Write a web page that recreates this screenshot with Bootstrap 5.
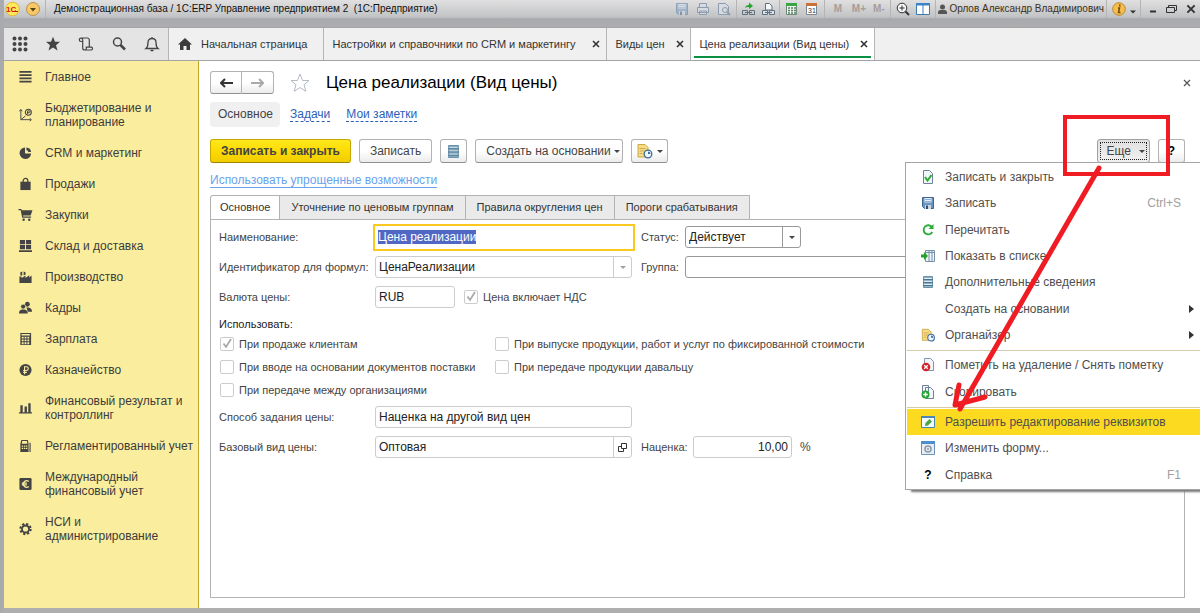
<!DOCTYPE html>
<html lang="ru">
<head>
<meta charset="utf-8">
<meta name="viewport" content="width=device-width, initial-scale=1">
<title>Цена реализации (Вид цены)</title>
<link href="https://cdn.jsdelivr.net/npm/bootstrap@5.3.0/dist/css/bootstrap.min.css" rel="stylesheet">
<style>
  body { font: 12px/14px "Liberation Sans", Arial, sans-serif; color: #444; background: #aeaeae; }
  svg { display: block; flex: none; }
  button { font: inherit; color: inherit; }
  .shell { border-left: 4px solid #a9aaad; border-bottom: 5px solid #aeaeae; overflow: hidden; }

  /* window title bar */
  .titlebar { height: 28px; padding: 0 0 10px 0; margin-left: -4px; color: #111; font-size: 10px;
    background: linear-gradient(#e0e0e1, #c2c3c5 17px, #a8a9ac 19px, #adaeb0 26px, #a3a3a3); }
  .bar-btn { border: 0; background: none; padding: 0; width: 21px; height: 18px; display: flex; align-items: center; justify-content: center; }
  .bar-btn.narrow { width: 19px; }
  .bar-sep { width: 1px; height: 18px; background: #b4b4b4; margin: 0 2px; }
  .mem { font-weight: 700; color: #a79c98; }
  .user { color: #3d3019; gap: 2px; }

  /* open sections */
  .tabbar { height: 33px; background: #f0f0f0; border-bottom: 1px solid #a5a5a5; font-size: 11px; }
  .tools { background: #e4e4e4; width: 164px; }
  .tools button { border: 0; background: none; padding: 0; width: 33px; height: 32px; display: flex; align-items: center; justify-content: center; }
  .page-tab { border-left: 1px solid #b5b5b5; padding: 0 5px 0 8px; gap: 4px; color: #333; text-decoration: none; position: relative; white-space: nowrap; }
  .page-tab.long { min-width: 283px; }
  .page-tab.short { min-width: 84px; }
  .page-tab.current { min-width: 185px; background: #fff; border-right: 1px solid #b5b5b5; }
  .page-tab.current::after { content: ""; position: absolute; left: 3px; right: 3px; bottom: 2px; height: 2px; background: #0c9143; }
  .x-btn { border: 0; background: none; padding: 0; width: 10px; height: 10px; }

  /* section list */
  .side { width: 195px; background: #fbed9e; border-right: 1px solid #bfa62c; }
  .side a { display: flex; align-items: center; gap: 12px; padding: 9px 0 8px 14px; color: #3c3c3c; text-decoration: none; }
  .side svg { width: 15px; height: 14px; fill: #444; }

  /* form */
  .sheet { background: #fff; padding: 10px 15px 10px 11px; min-width: 0; }
  .btn1 { height: 24px; border: 1px solid #b3b3b3; border-bottom-color: #909090; border-radius: 3px; background: linear-gradient(#fff 50%, #ececec); padding: 0 10px; display: flex; align-items: center; justify-content: center; white-space: nowrap; }
  .btn1.main { background: linear-gradient(#ffe81c, #fbd800 60%, #f1cd00); border-color: #c6a800; border-bottom-color: #9e8600; font-weight: 700; color: #444; }
  .btn1.nav1 { width: 32px; height: 23px; padding: 0; }
  .btn1.help { width: 27px; padding: 0; }
  .btn1.drop { gap: 3px; padding: 0 2px 0 10px; }
  .btn1.open { background: linear-gradient(#e0e0e0, #f1f1f1); border-color: #a0a0a0; outline: 1px dotted #222; outline-offset: -4px; padding: 0 4px 0 9px; }
  .caret { width: 0; height: 0; border: 3px solid transparent; border-top-color: #444; border-bottom: 0; }
  .heading { font-size: 17px; line-height: 22px; color: #000; font-weight: 400; }
  .form-x { margin-right: -7px; }
  .pill { background: #f0f0f0; border-radius: 4px; padding: 5px 7px 6px 8px; color: #444; text-decoration: none; }
  .dotlink { color: #2b5fb8; text-decoration: none; border-bottom: 1px dashed #2b5fb8; line-height: 13px; margin-left: 10px; }
  .softlink { color: #6aa3ee; line-height: 13px; text-decoration: none; border-bottom: 1px solid #6aa3ee; }
  .hint { margin: 10px 0 8px; }

  .form-tab { height: 25px; border: 1px solid #b3b3b3; border-left: 0; background: #eaeaea; padding: 0 11px 1px; color: #333; white-space: nowrap; font-size: 11px; }
  .form-tab:first-child { border-left: 1px solid #b3b3b3; border-top-left-radius: 3px; background: #fff; border-bottom-color: #fff; padding: 0 9px 1px; }
  .pane { border: 1px solid #b3b3b3; margin-top: -1px; padding: 6px 7px 0 8px; }
  .line { display: flex; align-items: center; height: 22px; margin-bottom: 8px; }
  .cap { width: 156px; flex: none; white-space: nowrap; }
  .pane label, .pane .use { font-size: 11px; }
  .box { height: 22px; border: 1px solid #ccc; border-radius: 3px; background: #fff; display: flex; min-width: 0; }
  .box.strong { border-color: #999; }
  .box input, .box select { border: 0; background: none; outline: 0; padding: 0 3px; flex: 1; min-width: 0; width: 10px; font: inherit; color: #222; appearance: none; }
  .box button { border: 0; border-left: 1px solid #ccc; background: none; width: 18px; padding: 0; display: flex; align-items: center; justify-content: center; }
  .box.strong button { border-color: #999; }
  .box.wide { width: 257px; flex: none; }
  .box.status { width: 116px; }
  .box.code { width: 80px; }
  .box.amount { width: 99px; }
  .box.focus1 { width: 262px; height: 27px; border: 2px solid #fac81e; border-radius: 0; margin: 0 -3px 0 -2px; align-items: center; flex: none; }
  .box input::selection { background: #5068c4; color: #fff; }
  .side-cap { width: 44px; margin-left: 9px; flex: none; }
  .tick { appearance: none; width: 14px; height: 14px; border: 1px solid #ccc; border-radius: 2px; margin: 0 0 0 1px; background: #fff; flex: none; }
  .tick:checked { background: #fff url("data:image/svg+xml,%3Csvg xmlns='http://www.w3.org/2000/svg' viewBox='0 0 12 12'%3E%3Cpath d='M2.5 5.5 5 9l5-8' fill='none' stroke='%23aaa' stroke-width='1.8'/%3E%3C/svg%3E"); }
  .check { display: flex; align-items: center; gap: 5px; height: 14px; white-space: nowrap; }
  .use { margin: 9px 0 6px; color: #222; }
  .checks { display: grid; grid-template-columns: 275px auto; justify-content: start; row-gap: 9px; margin-bottom: 9px; }

  /* command menu under the "more" button */
  .more-menu { position: absolute; top: 100%; right: -50px; width: 295px; min-height: 328px; margin-top: -1px; padding: 1px 0; background: #fff; border: 1px solid #a5a5a5; border-right: 0; box-shadow: 5px 3px 2px -1px #777; display: flex; flex-direction: column; z-index: 5; }
  .more-menu button { flex: 1 1 0; border: 0; background: none; padding: 0 8px 0 14px; margin-left: 1px; display: flex; align-items: center; gap: 10px; white-space: nowrap; text-align: left; color: #4f4f4f; }
  .more-menu button > svg, .more-menu .ico { width: 14px; height: 14px; flex: none; text-align: center; }
  .more-menu kbd { font: inherit; color: #a0a0a0; background: none; padding: 0; margin: 0 11px 0 auto; }
  .more-menu hr { margin: 2px 0 1px 1px; border-top: 1px solid #d5cba9; opacity: 1; flex: none; }
  .more-menu .hot { background: #fbda20; }
  .more-menu .arrow { margin: 0 -2px 0 auto; border: 4px solid transparent; border-left: 5px solid #333; border-right: 0; }
  .marks { position: absolute; top: -29px; right: -40px; z-index: 6; pointer-events: none; }
</style>
</head>
<body>
<svg width="0" height="0" class="position-absolute">
  <defs>
    <symbol id="db" viewBox="0 0 14 14"><path fill="#8fb2c7" stroke="#6b93ab" d="M2.500 1.500h9v11h-9z"/><path stroke="#dbe8f0" d="M3 3.500h8M3 6.500h8M3 9.500h8"/><path stroke="#4d7690" d="M2 4.500h10M2 7.500h10M2 10.500h10"/></symbol>
    <symbol id="organizer" viewBox="0 0 16 16"><path fill="#f6dc86" stroke="#cda743" d="M1.500 1.500h7l3 3v9.500h-10z"/><path stroke="#d1ac4b" d="M3 5.500h6M3 8h5M3 10.500h3"/><circle cx="11.500" cy="11" r="3.800" fill="#eef5fc" stroke="#3d6c9c" stroke-width="1.300"/><path d="M11.500 11V8.500A2.600 2.600 0 0 1 14 11z" fill="#3d6c9c"/></symbol>
    <symbol id="disk" viewBox="0 0 14 14"><path fill="#6a94c0" stroke="#3c6593" d="M1.500 1.500h11v11h-9l-2-2z"/><path fill="#e6eef7" d="M3.500 2h7v4.500h-7z"/><path stroke="#8fb0d3" d="M4 3.500h6M4 5.500h6"/><path fill="#cdd7e2" d="M4 9h6v4H4z"/><path fill="#2f4f76" d="M5 9.500h2V13H5z"/></symbol>
    <symbol id="x" viewBox="0 0 10 10"><path d="m2 2 6 6M8 2 2 8" stroke="#333" stroke-width="1.600"/></symbol>
  </defs>
</svg>

<div class="shell min-vh-100 d-flex flex-column">
  <header class="titlebar d-flex align-items-center">
    <svg width="45" height="18" viewBox="0 0 45 18"><circle cx="12.500" cy="9" r="6.800" fill="#ffe95a" stroke="#e0b93a"/><text x="6" y="12" font-size="8" font-weight="700" fill="#d8161c">1С</text><path d="M12 11.500h6" stroke="#d8161c"/><circle cx="33" cy="9" r="6.500" fill="#f9c866" stroke="#b5924f"/><path d="M30 8h6l-3 3.500z" fill="#5a4215"/></svg>
    <span class="bar-sep ms-0 me-2"></span>
    <span class="text-nowrap">Демонстрационная база / 1С:ERP Управление предприятием 2&nbsp; (1С:Предприятие)</span>
    <div class="ms-auto d-flex align-items-center">
      <button class="bar-btn" aria-label="Сохранить"><svg width="14" height="14" opacity=".45"><use href="#disk"/></svg></button>
      <button class="bar-btn" aria-label="Печать"><svg width="14" height="14" viewBox="0 0 14 14" fill="#d6dbe1" stroke="#8d9cac"><path d="M3.500 5V1.500h7V5M1.500 5.500h11v5h-11zM3.500 9h7v3.500h-7z"/></svg></button>
      <button class="bar-btn" aria-label="Просмотр"><svg width="14" height="14" viewBox="0 0 14 14" fill="#d6dbe1" stroke="#8d9cac"><path d="M1.500 1.500h7l3 3v8h-10z"/><circle cx="8" cy="8" r="2.500"/><path d="m10 10 3 3" stroke-width="2"/></svg></button>
      <span class="bar-sep"></span>
      <button class="bar-btn narrow" aria-label="Ссылка"><svg width="15" height="14" viewBox="0 0 15 14"><path d="M1.500 8.500h5v4h-5zM8.500 8.500h5v4h-5zM4 10.500h7" fill="none" stroke="#5f7180"/><path d="M4 6c1-3 3-3 4-3V.5L12 4 8 7V5C6 5 5 5 4 6" fill="#25a52b"/></svg></button>
      <button class="bar-btn" aria-label="Перейти"><svg width="15" height="14" viewBox="0 0 15 14" stroke="#5f7180"><path d="M4.500 1.500h4l2.500 2.500v4H4.500z" fill="#f5f8fb"/><path d="M1.500 8.500h5v4h-5zM8.500 8.500h5v4h-5zM4 10.500h7" fill="#dbe2e8"/></svg></button>
      <span class="bar-sep ms-0"></span>
      <button class="bar-btn narrow" aria-label="Калькулятор"><svg width="13" height="14" viewBox="0 0 13 14"><path fill="#eef3ee" stroke="#6e8a77" d="M1.500 1.500h10v11h-10z"/><path fill="#3aa545" d="M1 1h11v3H1z"/><path stroke="#58806a" stroke-dasharray="2 1" stroke-width="1.500" d="M3 6h8M3 8.500h8M3 11h8"/></svg></button>
      <button class="bar-btn" aria-label="Календарь"><svg width="13" height="14" viewBox="0 0 13 14"><path fill="#fff" stroke="#7c8894" d="M1.500 1.500h10v11h-10z"/><path fill="#c9713b" d="M1 1h11v3H1z"/><text x="3" y="11" font-size="7" fill="#334">31</text></svg></button>
      <span class="bar-sep"></span>
      <button class="bar-btn mem">M</button><button class="bar-btn mem">M+</button><button class="bar-btn mem narrow">M-</button>
      <span class="bar-sep"></span>
      <button class="bar-btn narrow" aria-label="Масштаб"><svg width="14" height="14" viewBox="0 0 14 14" fill="none" stroke="#333"><circle cx="6" cy="6" r="4.800" fill="#f5f5f5"/><path d="M3.500 6h5M6 3.500v5"/><path d="m9.500 9.500 3.500 3.500" stroke-width="2"/></svg></button>
      <button class="bar-btn" aria-label="Панели"><svg width="14" height="14" viewBox="0 0 14 14"><path d="M.5 1.500h13v11H.5z" fill="#fff" stroke="#3d79ae"/><path d="M0 1h14v2.500H0zM6.500 1h1v12h-1z" fill="#3d84c6"/></svg></button>
      <span class="bar-sep"></span>
      <span class="user d-flex align-items-center text-nowrap"><svg width="9" height="11" viewBox="0 0 9 11" fill="#555"><circle cx="4.500" cy="3" r="2.500"/><path d="M0 9c0-3 2-3 3-3h3c1 0 3 0 3 3v1H0z"/></svg>Орлов Александр Владимирович</span>
      <span class="bar-sep"></span>
      <button class="bar-btn narrow" aria-label="Информация"><svg width="14" height="14" viewBox="0 0 14 14"><circle cx="7" cy="7" r="6.300" fill="#f6bd4c" stroke="#b98a32"/><path d="M7.800 2.500v2M6 6h1.500L6.500 10.500H8.500" stroke="#704d10" stroke-width="1.500" fill="none"/></svg></button>
      <svg width="10" height="18" viewBox="0 0 10 18"><path d="M2 10.500h6l-3 3z" fill="#333"/></svg>
      <span class="bar-sep"></span>
      <button class="bar-btn narrow" aria-label="Свернуть"><svg width="10" height="10"><path d="M2 7.500h6" stroke="#333" stroke-width="2"/></svg></button>
      <button class="bar-btn narrow" aria-label="Восстановить"><svg width="11" height="10" viewBox="0 0 11 10" fill="none" stroke="#333"><path d="M2.500 3V1.500h8v5H8.500M.5 3.500h8v5h-8z"/></svg></button>
      <button class="bar-btn narrow" aria-label="Закрыть"><svg width="12" height="12"><use href="#x"/></svg></button>
    </div>
  </header>

  <nav class="tabbar d-flex align-items-stretch">
    <div class="tools d-flex">
      <button aria-label="Меню"><svg width="16" height="16" viewBox="0 0 16 16" fill="#444"><circle cx="2.500" cy="2.500" r="2"/><circle cx="8" cy="2.500" r="2"/><circle cx="13.500" cy="2.500" r="2"/><circle cx="2.500" cy="8" r="2"/><circle cx="8" cy="8" r="2"/><circle cx="13.500" cy="8" r="2"/><circle cx="2.500" cy="13.500" r="2"/><circle cx="8" cy="13.500" r="2"/><circle cx="13.500" cy="13.500" r="2"/></svg></button>
      <button aria-label="Избранное"><svg width="16" height="16" viewBox="0 0 16 16" fill="#444"><path d="m8 .8 2 5h5l-4 3.400 1.500 5.300L8 11.400l-4.500 3.100L5 9.200 1 5.800h5z"/></svg></button>
      <button aria-label="История"><svg width="16" height="16" viewBox="0 0 16 16" fill="none" stroke="#444" stroke-width="1.200"><path d="M4.500 5.500H3a1.700 1.700 0 1 1 1.700-1.700V12a2 2 0 0 0 2 2H13a1.500 1.500 0 0 0 .8-2.800H11.300V4a2 2 0 0 0-2-2H3M6.700 14c1.600 0 1.700-1.300 1.600-2.800h3"/></svg></button>
      <button aria-label="Поиск"><svg width="16" height="16" viewBox="0 0 16 16" fill="none" stroke="#444"><circle cx="6.500" cy="6" r="4" stroke-width="1.500"/><path d="m9.500 9 4.500 4.500" stroke-width="2.500"/></svg></button>
      <button aria-label="Уведомления"><svg width="16" height="16" viewBox="0 0 16 16" fill="none" stroke="#444" stroke-width="1.300"><path d="M2 12.500c2-1.500 2-3 2-6 0-2.500 1.500-4 4-4s4 1.500 4 4c0 3 0 4.500 2 6zM8 1v1.500M6.500 14.500h3"/></svg></button>
    </div>
    <a href="#" class="page-tab d-flex align-items-center pe-3"><svg width="16" height="14" viewBox="0 0 16 14" fill="#3c3c3c"><path d="M8 1 1 7.500h2V13h3.500V9h3v4H13V7.500h2z"/></svg><span class="ms-1">Начальная страница</span></a>
    <div class="page-tab long d-flex align-items-center justify-content-between"><a href="#" class="text-reset text-decoration-none">Настройки и справочники по CRM и маркетингу</a><button class="x-btn" aria-label="Закрыть"><svg width="10" height="10"><use href="#x"/></svg></button></div>
    <div class="page-tab short d-flex align-items-center justify-content-between"><a href="#" class="text-reset text-decoration-none">Виды цен</a><button class="x-btn" aria-label="Закрыть"><svg width="10" height="10"><use href="#x"/></svg></button></div>
    <div class="page-tab current d-flex align-items-center justify-content-between"><a href="#" class="text-reset text-decoration-none">Цена реализации (Вид цены)</a><button class="x-btn" aria-label="Закрыть"><svg width="10" height="10"><use href="#x"/></svg></button></div>
  </nav>

  <div class="d-flex flex-fill">
    <nav class="side flex-shrink-0">
      <a href="#"><svg viewBox="0 0 15 15"><path d="M1 1h13v2H1zM1 4.500h13v2H1zM1 8h13v2H1zM1 11.500h13v2H1z"/></svg>Главное</a>
      <a href="#"><svg viewBox="0 0 15 15"><path d="M2.500 2v10.500H13M1 3.500l1.500-2 1.500 2M12 11l1.800 1.500L12 14M2.500 12.500l5-4" fill="none" stroke="#444"/><circle cx="10.500" cy="4.500" r="3.200" fill="none" stroke="#444" stroke-width="1.200"/><path d="M9.800 7V3h1.500a1 1 0 0 1 0 2H9" fill="none" stroke="#444"/></svg><span>Бюджетирование и<br>планирование</span></a>
      <a href="#"><svg viewBox="0 0 15 15"><path d="M7 1.500V8h6.500A6.200 6.200 0 1 1 7 1.500"/><path d="M8.500 1.500a5.500 5.500 0 0 1 5 5h-3a2 2 0 0 0-2-2z"/></svg>CRM и маркетинг</a>
      <a href="#"><svg viewBox="0 0 15 15"><path d="M2 5h11v9H2z"/><path d="M5 7V4a2.500 2.500 0 0 1 5 0v3" fill="none" stroke="#444" stroke-width="1.300"/></svg>Продажи</a>
      <a href="#"><svg viewBox="0 0 15 15"><path d="M0 1h3l.5 1.500H15L13 8H5v1.200h8.500v1.300H4L2.300 2.300H0z"/><circle cx="5.500" cy="12.500" r="1.300"/><circle cx="11.500" cy="12.500" r="1.300"/></svg>Закупки</a>
      <a href="#"><svg viewBox="0 0 15 15"><path d="M1.500 1h5.500v4.500H1.500zM8 1h5.500v4.500H8zM1.500 6.500H7V11H1.500zM8 6.500h5.500V11H8zM.5 12h14v1.800H.5z"/></svg>Склад и доставка</a>
      <a href="#"><svg viewBox="0 0 15 15"><path d="M1 14V7h2l.5 1.500L7.500 6v2.500l4-3V8L14 6v8zM2 2.500l2-1v4.500H2zM5.500 1.500l2 1V5l-2 .5z"/></svg>Производство</a>
      <a href="#"><svg viewBox="0 0 15 15"><circle cx="9.500" cy="3.500" r="2.600"/><path d="M8.500 7h2c2.500.5 4 1.500 4 4.500H10z"/><circle cx="5" cy="6" r="2.600" stroke="#fbed9e" stroke-width=".6"/><path d="M.5 13.500c0-3 1-4 3-4.500h3c2 .5 3.500 1.500 3.500 4.500z"/></svg>Кадры</a>
      <a href="#"><svg viewBox="0 0 15 15"><path fill-rule="evenodd" d="M2 1h11.500v13H2zM3.200 2.200v1.500h9V2.200zM3.500 5v2h2V5zm3 0v2h2V5zm3 0v2h2V5zm-6 3v2h2V8zm3 0v2h2V8zm3 0v2h2V8zm-6 3v2h2v-2zm3 0v2h2v-2zm3 0v2h2v-2z"/></svg>Зарплата</a>
      <a href="#"><svg viewBox="0 0 15 15"><circle cx="7.500" cy="7.500" r="6.500"/><path d="M6.500 12V4h2a2 2 0 0 1 0 4H5M5 10h4" fill="none" stroke="#fbed9e" stroke-width="1.200"/></svg>Казначейство</a>
      <a href="#"><svg viewBox="0 0 15 15"><path d="M2 4.500h2.500V12H2zM6.500 6H9v6H6.500zM10.500 2.500H13V12h-2.500zM.5 12h14v1.300H.5z"/></svg><span>Финансовый результат и<br>контроллинг</span></a>
      <a href="#"><svg viewBox="0 0 15 15"><path fill-rule="evenodd" d="M3 1h7l.8 4v9H2V5zM4 2.200 3.500 5h6L9 2.200zM3.500 7v1.300H5V7zm2.300 0v1.300h1.500V7zm2.200 0v1.300h1.500V7zM3.500 9.500v1.300H5V9.500zm2.300 0v1.300h1.500V9.500zm2.200 0v1.300h1.500V9.500zM11.800 4H13v10h-1.200z"/></svg><span class="text-nowrap">Регламентированный учет</span></a>
      <a href="#"><svg viewBox="0 0 15 15"><rect x="1" y="1" width="13" height="13" rx="1.500"/><path d="M11 4.800A3.500 3.500 0 1 0 11 10.200M3.500 6.500H9M3.500 8.500H9" fill="none" stroke="#fbed9e" stroke-width="1.300"/></svg><span>Международный<br>финансовый учет</span></a>
      <a href="#"><svg viewBox="0 0 15 15"><circle cx="7.500" cy="7.500" r="3.800" fill="none" stroke="#444" stroke-width="2"/><circle cx="7.500" cy="7.500" r="5.500" fill="none" stroke="#444" stroke-width="2.200" stroke-dasharray="2.300 2.020"/></svg><span>НСИ и<br>администрирование</span></a>
    </nav>

    <main class="sheet flex-fill d-flex flex-column">
      <div class="d-flex align-items-center">
        <button class="btn1 nav1 rounded-end-0" aria-label="Назад"><svg width="13" height="10" viewBox="0 0 13 10"><path d="M1 5h12M5 1 1 5l4 4" fill="none" stroke="#333" stroke-width="2"/></svg></button>
        <button class="btn1 nav1 rounded-start-0 border-start-0" aria-label="Вперед"><svg width="13" height="10" viewBox="0 0 13 10"><path d="M0 5h12M8 1l4 4-4 4" fill="none" stroke="#aaa" stroke-width="2"/></svg></button>
        <svg class="ms-3 me-3" width="20" height="20" viewBox="0 0 20 20"><path d="m10 1 2.500 6.500H19L14 11.700l1.800 6.600L10 14.500l-5.800 3.800L6 11.700 1 7.500h6.500z" fill="#fff" stroke="#b5bcc4"/></svg>
        <h1 class="heading m-0">Цена реализации (Вид цены)</h1>
        <button class="x-btn form-x ms-auto" aria-label="Закрыть форму"><svg width="10" height="10" viewBox="0 0 10 10"><path d="m2 2 6 6M8 2 2 8" stroke="#555" stroke-width="1.200"/></svg></button>
      </div>
      <div class="d-flex align-items-center mt-2">
        <a href="#" class="pill">Основное</a><a href="#" class="dotlink">Задачи</a><a href="#" class="dotlink ms-3">Мои заметки</a>
      </div>
      <div class="d-flex gap-2 pt-1 mt-2">
        <button class="btn1 main">Записать и закрыть</button>
        <button class="btn1">Записать</button>
        <button class="btn1 px-1" aria-label="Дополнительные сведения"><svg width="17" height="15"><use href="#db"/></svg></button>
        <button class="btn1 drop">Создать на основании <span class="caret"></span></button>
        <button class="btn1 px-1 gap-1" aria-label="Органайзер"><svg width="17" height="16"><use href="#organizer"/></svg><span class="caret"></span></button>
        <div class="position-relative ms-auto">
          <button class="btn1 open gap-1" aria-expanded="true">Еще <span class="caret ms-1"></span></button>
          <div class="more-menu" role="menu">
            <button role="menuitem"><svg viewBox="0 0 14 14"><path d="M2.500.5h6l3 3v10h-9z" fill="#f2f6fb" stroke="#6b8299"/><path d="m4 7 2.500 3.500L10.500 5" fill="none" stroke="#2cab35" stroke-width="2"/></svg>Записать и закрыть</button>
            <button role="menuitem"><svg><use href="#disk"/></svg>Записать<kbd>Ctrl+S</kbd></button>
            <button role="menuitem"><svg viewBox="0 0 14 14"><path d="M11 4.200A4.600 4.600 0 1 0 11.300 9" fill="none" stroke="#2cab35" stroke-width="1.800"/><path d="M12.500 1v5H7.500z" fill="#2cab35"/></svg>Перечитать</button>
            <button role="menuitem"><svg viewBox="0 0 14 14"><path d="M4.500 1.500h9v11h-9z" fill="#eef3f8" stroke="#7690aa"/><path d="M4 3.500h10M8 2v11M11 2v11" stroke="#7690aa"/><path d="M0 5.500h3V3l4 4-4 4V8.500H0z" fill="#23a12b"/></svg>Показать в списке</button>
            <button role="menuitem"><svg><use href="#db"/></svg>Дополнительные сведения</button>
            <button role="menuitem"><span class="ico"></span>Создать на основании<span class="arrow"></span></button>
            <button role="menuitem"><svg><use href="#organizer"/></svg>Органайзер<span class="arrow"></span></button>
            <hr>
            <button role="menuitem"><svg viewBox="0 0 14 14"><path d="M3.500.5h6l3 3v9h-9z" fill="#f2f6fb" stroke="#8295a8"/><circle cx="5" cy="9" r="4.300" fill="#d3222a"/><path d="m3.200 7.200 3.600 3.600M6.800 7.200l-3.600 3.600" stroke="#fff" stroke-width="1.300"/></svg>Пометить на удаление / Снять пометку</button>
            <button role="menuitem"><svg viewBox="0 0 14 14"><path d="M1.500.5h6v9h-6zM4.500 2.500h5l3 3v8h-8z" fill="#f2f6fb" stroke="#6b8299"/><circle cx="4.500" cy="9.500" r="4" fill="#28a135"/><path d="M4.500 7.200v4.600M2.200 9.500h4.600" stroke="#fff" stroke-width="1.300"/></svg>Скопировать</button>
            <hr>
            <button role="menuitem" class="hot"><svg viewBox="0 0 14 14"><path d="M.5 1.500h13v11H.5z" fill="#f4faff" stroke="#4c86b4"/><path d="M0 1h14v2H0z" fill="#4c86b4"/><path d="m4 11 .5-3 4-4 2.500 2.500-4 4z" fill="#48a83c"/></svg>Разрешить редактирование реквизитов</button>
            <button role="menuitem"><svg viewBox="0 0 14 14"><path d="M.5.500h13v13H.5z" fill="#e6edf4" stroke="#6d93b8"/><path d="M0 0h14v3H0z" fill="#4b8fce"/><circle cx="7" cy="8" r="3" fill="none" stroke="#8d99a6" stroke-width="1.500"/><circle cx="7" cy="8" r="1" fill="#8d99a6"/></svg>Изменить форму...</button>
            <button role="menuitem"><span class="ico fw-bold text-black">?</span>Справка<kbd>F1</kbd></button>
          </div>
          <svg class="marks" width="240" height="305" viewBox="0 0 240 305" fill="none" stroke="#ef1c24" stroke-width="4" stroke-linecap="round"><path d="M115 7h103v57H115z" stroke-linecap="butt"/><path d="M149 58 10 299M9 275l-4 20 30-8" stroke-width="5" stroke-linejoin="round"/></svg>
        </div>
        <button class="btn1 help fw-bold text-black" aria-label="Справка">?</button>
      </div>
      <div class="hint"><a href="#" class="softlink">Использовать упрощенные возможности</a></div>
      <div class="d-flex" role="tablist">
        <button class="form-tab" role="tab" aria-selected="true">Основное</button>
        <button class="form-tab" role="tab">Уточнение по ценовым группам</button>
        <button class="form-tab" role="tab">Правила округления цен</button>
        <button class="form-tab" role="tab">Пороги срабатывания</button>
      </div>
      <form class="pane flex-fill">
        <div class="line">
          <label class="cap" for="name">Наименование:</label>
          <div class="box focus1"><input id="name" value="Цена реализации"></div>
          <label class="side-cap" for="status">Статус:</label>
          <div class="box strong status"><select id="status"><option>Действует</option></select><button type="button" aria-label="Открыть список"><span class="caret"></span></button></div>
        </div>
        <div class="line">
          <label class="cap" for="ident">Идентификатор для формул:</label>
          <div class="box wide"><input id="ident" value="ЦенаРеализации"><button type="button" aria-label="Открыть список"><span class="caret opacity-50"></span></button></div>
          <label class="side-cap" for="group">Группа:</label>
          <div class="box strong flex-fill"><input id="group"></div>
        </div>
        <div class="line">
          <label class="cap" for="currency">Валюта цены:</label>
          <div class="box code"><input id="currency" value="RUB"></div>
          <label class="check ms-2"><input class="tick" type="checkbox" checked>Цена включает НДС</label>
        </div>
        <div class="use">Использовать:</div>
        <div class="checks">
          <label class="check"><input class="tick" type="checkbox" checked>При продаже клиентам</label>
          <label class="check"><input class="tick" type="checkbox">При выпуске продукции, работ и услуг по фиксированной стоимости</label>
          <label class="check"><input class="tick" type="checkbox">При вводе на основании документов поставки</label>
          <label class="check"><input class="tick" type="checkbox">При передаче продукции давальцу</label>
          <label class="check"><input class="tick" type="checkbox">При передаче между организациями</label>
        </div>
        <div class="line">
          <label class="cap" for="method">Способ задания цены:</label>
          <div class="box wide"><input id="method" value="Наценка на другой вид цен"></div>
        </div>
        <div class="line">
          <label class="cap" for="base">Базовый вид цены:</label>
          <div class="box wide"><input id="base" value="Оптовая"><button type="button" aria-label="Открыть"><svg width="9" height="9" viewBox="0 0 9 9" fill="none" stroke="#333"><path d="M3.500.5h5v5h-5zM3 3.500H.5v5h5V6"/></svg></button></div>
          <label class="side-cap me-2" for="markup">Наценка:</label>
          <div class="box amount"><input id="markup" class="text-end" value="10,00"></div>
          <span class="ms-2">%</span>
        </div>
      </form>
    </main>
  </div>
</div>
<script src="https://cdn.jsdelivr.net/npm/bootstrap@5.3.0/dist/js/bootstrap.bundle.min.js"></script>
<script>
  const nameField = document.getElementById("name");
  nameField.focus();
  nameField.select();
</script>
</body>
</html>
